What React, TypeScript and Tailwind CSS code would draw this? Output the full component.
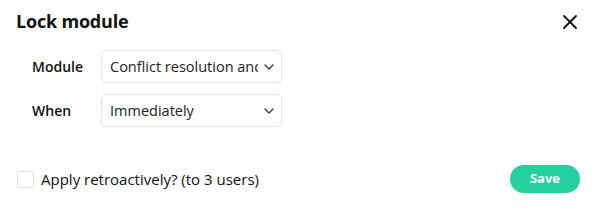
import React from "react";

function Chevron() {
  return (
    <svg width="10" height="6" viewBox="0 0 10 6" fill="none" className="shrink-0">
      <path d="M1 1l4 4 4-4" stroke="#333" strokeWidth="1.3" strokeLinecap="round" strokeLinejoin="round" />
    </svg>
  );
}

function Select({ value }: { value: string }) {
  return (
    <div className="flex h-[33px] w-[181px] items-center rounded-[5px] border border-[#e3e3ee] bg-white pl-[8px] pr-[7px]">
      <div className="flex-1 overflow-hidden whitespace-nowrap text-[14.5px] text-[#222]">{value}</div>
      <div className="pl-[6px]"><Chevron /></div>
    </div>
  );
}

export default function App() {
  return (
    <div className="h-[211px] w-[596px] bg-white" style={{ fontFamily: '"Open Sans", "Noto Sans", sans-serif' }}>
      <div className="flex items-center justify-between pl-[16px] pr-[18px] pt-[8px]">
        <div className="text-[18px] font-bold tracking-[-0.2px] text-[#111]">Lock module</div>
        <svg width="16" height="16" viewBox="0 0 16 16" fill="none">
          <path d="M2 2l12 12M14 2L2 14" stroke="#111" strokeWidth="1.8" strokeLinecap="round" />
        </svg>
      </div>
      <div className="mt-[15px] flex flex-col gap-[11px] pl-[32px]">
        <div className="flex items-center">
          <div className="w-[69px] text-[14px] font-semibold text-[#111]">Module</div>
          <Select value="Conflict resolution and management" />
        </div>
        <div className="flex items-center">
          <div className="w-[69px] text-[14px] font-semibold text-[#111]">When</div>
          <Select value="Immediately" />
        </div>
      </div>
      <div className="mt-[38px] flex items-center justify-between pl-[17px] pr-[16px]">
        <div className="flex items-center gap-[7px]">
          <div className="h-[17px] w-[17px] rounded-[3px] border border-[#e0e0ee] bg-white" />
          <div className="text-[15px] text-[#111]">Apply retroactively? (to 3 users)</div>
        </div>
        <button className="h-[28px] w-[70px] rounded-full bg-[#25d09f] text-[13px] font-bold text-white">Save</button>
      </div>
    </div>
  );
}
